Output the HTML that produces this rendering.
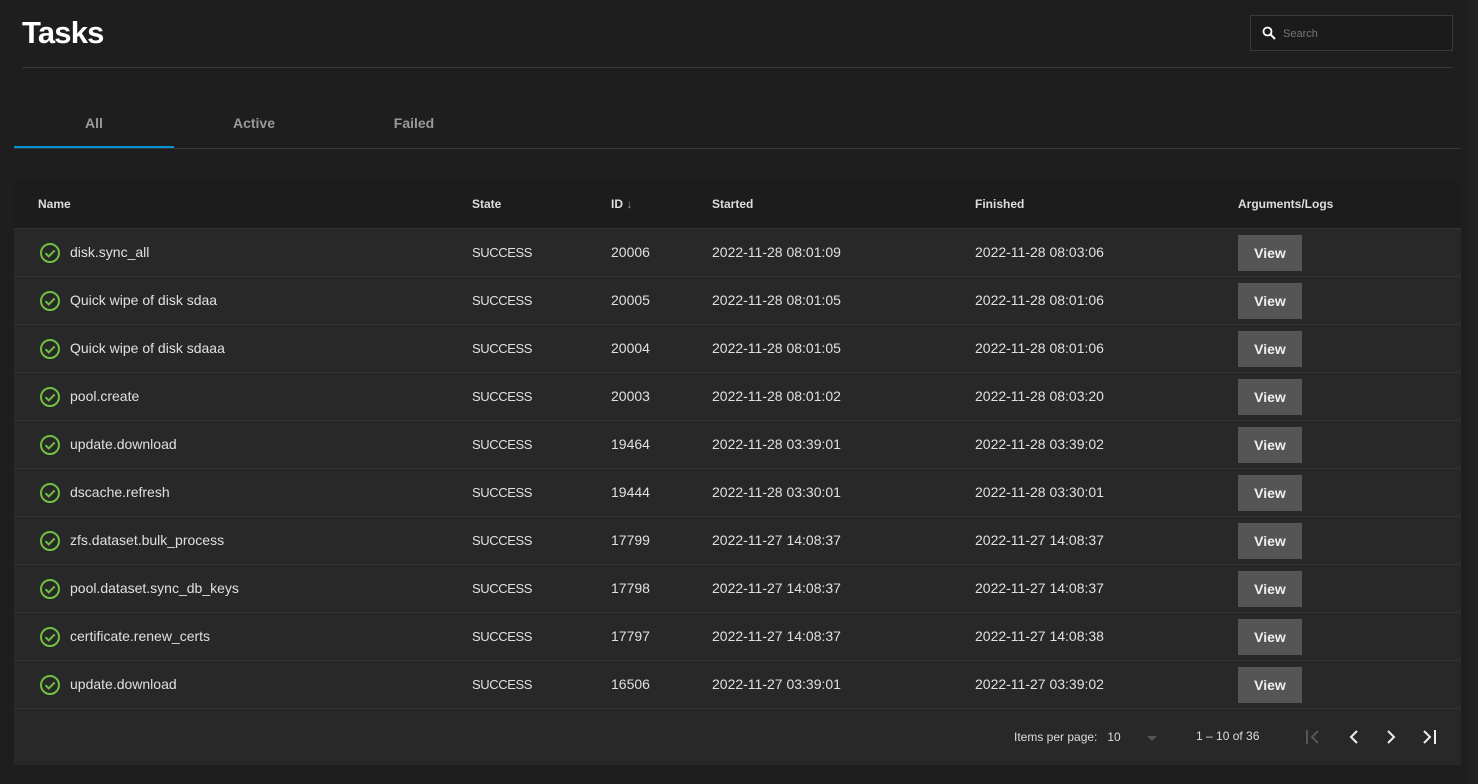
<!DOCTYPE html><html><head><style>
body{margin:0;width:1478px;height:784px;background:#1e1e1e;font-family:"Liberation Sans",sans-serif;color:#e6e6e6;position:relative;overflow:hidden}
.a{position:absolute}
.sb{right:0;top:0;width:10px;height:784px;background:#222}
h1{position:absolute;left:22px;top:15px;margin:0;font-size:31px;font-weight:bold;color:#fff;letter-spacing:-0.8px}
.search{left:1250px;top:15px;width:203px;height:36px;border:1px solid #3a3a3a;background:#1b1b1b;box-sizing:border-box}
.search span{position:absolute;left:32px;top:12px;font-size:11px;color:#777}
.tab{top:115px;width:160px;text-align:center;font-size:14px;font-weight:bold;color:#999}
.tbl{left:14px;top:180px;width:1447px;height:585px;background:#282828}
.hd{left:0;top:0;width:1447px;height:49px;background:#1c1c1c;border-bottom:1px solid #333;box-sizing:border-box;font-size:12px;font-weight:bold;color:#ddd}
.hd div,.row div{position:absolute}
.row{position:absolute;left:0;width:1447px;height:48px;border-bottom:1px solid #333;box-sizing:border-box;font-size:14px;color:#e0e0e0}
.btn{left:1224px;top:6px;width:64px;height:36px;background:#555;color:#eee;font-weight:bold;font-size:14px;text-align:center;line-height:36px}
.ft{font-size:12px;color:#ddd}
.st{font-size:13px;letter-spacing:-0.4px}
</style></head><body>
<div class="a sb"></div>
<h1>Tasks</h1>
<div class="a search"><svg class="a" style="left:11px;top:10px" width="14" height="14" viewBox="0 0 14 14"><circle cx="5.5" cy="5.5" r="4" fill="none" stroke="#fff" stroke-width="1.8"/><path d="M8.5 8.5L13 13" stroke="#fff" stroke-width="2"/></svg><span>Search</span></div>
<div class="a" style="left:22px;top:67px;width:1431px;height:1px;background:#363636"></div>
<div class="a tab" style="left:14px">All</div>
<div class="a tab" style="left:174px">Active</div>
<div class="a tab" style="left:334px">Failed</div>
<div class="a" style="left:14px;top:148px;width:1447px;height:1px;background:#363636"></div>
<div class="a" style="left:14px;top:146px;width:160px;height:2px;background:#0095d5"></div>
<div class="a tbl">
<div class="a hd"><div style="left:24px;top:17px">Name</div><div style="left:458px;top:17px">State</div><div style="left:597px;top:17px">ID <span style="color:#999">&#8595;</span></div><div style="left:698px;top:17px">Started</div><div style="left:961px;top:17px">Finished</div><div style="left:1224px;top:17px">Arguments/Logs</div></div>
<div id="rows"></div>
<div class="a ft" style="left:1000px;top:550px">Items per page:&nbsp;&nbsp; 10</div>
<div class="a" style="left:1133px;top:556px;width:0;height:0;border-left:5px solid transparent;border-right:5px solid transparent;border-top:5px solid #555"></div>
<div class="a ft" style="left:1182px;top:549px">1 – 10 of 36</div>
<svg class="a" style="left:1288px;top:545px" width="150" height="24" viewBox="0 0 150 24"><g fill="none" stroke-width="2"><path d="M5 5v14M16 6l-6 6 6 6" stroke="#555"/><path d="M55 6l-6 6 6 6M86 6l6 6-6 6M122 6l6 6-6 6" stroke="#eee"/><path d="M133 5v14" stroke="#eee"/></g></svg>
</div>
<script>
var d=[["disk.sync_all","20006","2022-11-28 08:01:09","2022-11-28 08:03:06"],["Quick wipe of disk sdaa","20005","2022-11-28 08:01:05","2022-11-28 08:01:06"],["Quick wipe of disk sdaaa","20004","2022-11-28 08:01:05","2022-11-28 08:01:06"],["pool.create","20003","2022-11-28 08:01:02","2022-11-28 08:03:20"],["update.download","19464","2022-11-28 03:39:01","2022-11-28 03:39:02"],["dscache.refresh","19444","2022-11-28 03:30:01","2022-11-28 03:30:01"],["zfs.dataset.bulk_process","17799","2022-11-27 14:08:37","2022-11-27 14:08:37"],["pool.dataset.sync_db_keys","17798","2022-11-27 14:08:37","2022-11-27 14:08:37"],["certificate.renew_certs","17797","2022-11-27 14:08:37","2022-11-27 14:08:38"],["update.download","16506","2022-11-27 03:39:01","2022-11-27 03:39:02"]];
var h="";d.forEach(function(r,i){h+='<div class="row" style="top:'+(49+i*48)+'px"><svg style="position:absolute;left:25px;top:13px" width="22" height="22" viewBox="0 0 22 22"><circle cx="11" cy="11" r="9" fill="none" stroke="#71bf44" stroke-width="2"/><path d="M6.5 11.2l3.2 3.2 6-6" fill="none" stroke="#71bf44" stroke-width="2"/></svg><div style="left:56px;top:15px">'+r[0]+'</div><div class="st" style="left:458px;top:16px">SUCCESS</div><div style="left:597px;top:15px">'+r[1]+'</div><div style="left:698px;top:15px">'+r[2]+'</div><div style="left:961px;top:15px">'+r[3]+'</div><div class="btn">View</div></div>'});
document.getElementById("rows").innerHTML=h;
</script>
</body></html>
